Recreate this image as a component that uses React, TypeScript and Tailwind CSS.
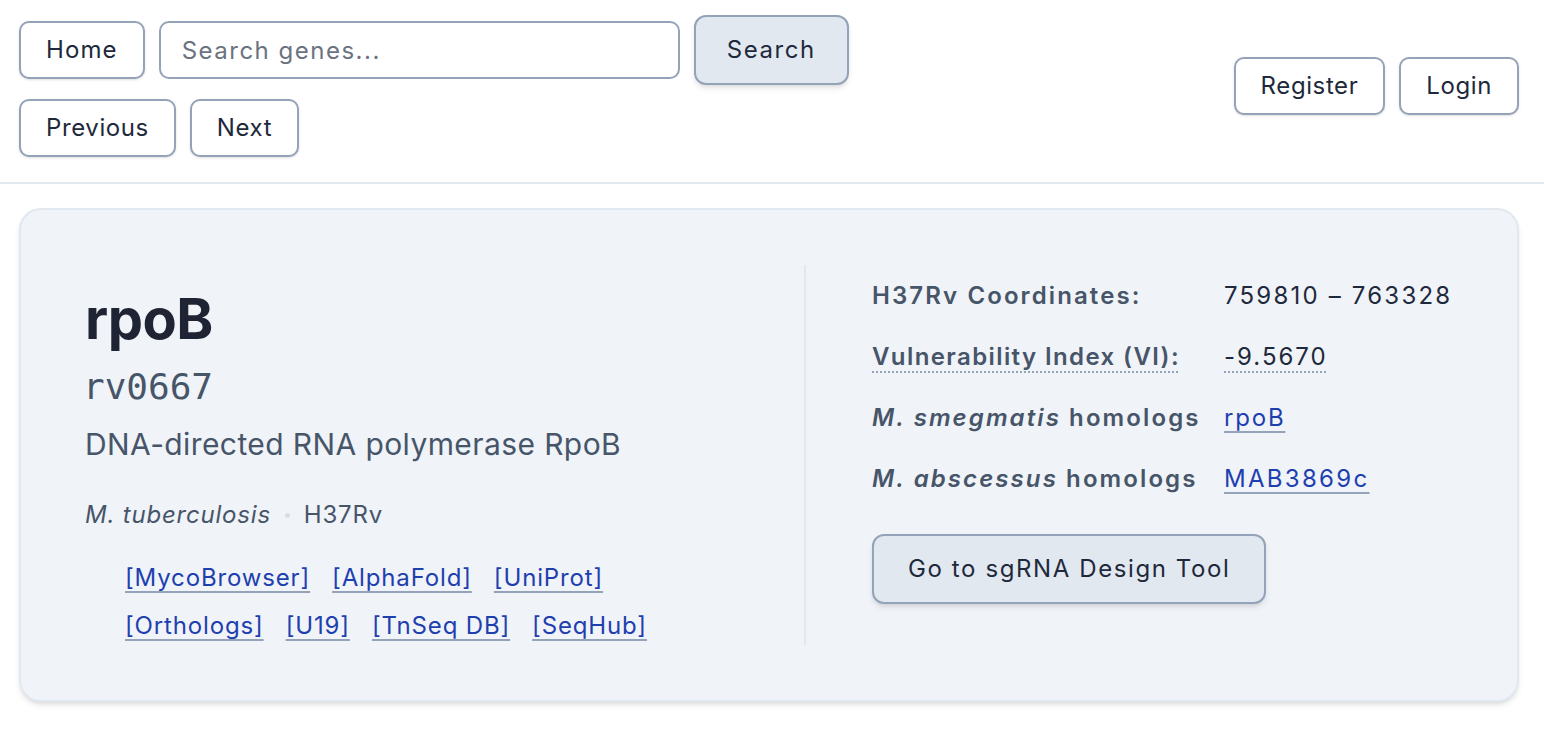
import React from "react";

const btn =
  "h-[58px] px-[25px] rounded-[10px] border-2 border-[#94a3b8] bg-white text-[24px] tracking-[0.6px] text-[#1e293b] shadow-sm flex items-center";

function A({ children, className = "" }: { children: React.ReactNode; className?: string }) {
  return (
    <a
      href="#"
      className={
        "text-[#1e40af] underline decoration-[#94a3b8] decoration-2 underline-offset-[5px] " + className
      }
    >
      {children}
    </a>
  );
}

export default function App() {
  return (
    <div
      className="min-h-[730px] bg-white text-[#1e293b]"
      style={{ fontFamily: "Inter, 'Noto Sans', sans-serif" }}
    >
      <header className="flex items-center justify-between pl-[19px] pr-[25px] pt-[15px] pb-[25px] border-b-2 border-[#e2e8f0]">
        <div className="flex flex-col gap-[14px]">
          <div className="flex items-center gap-[14px]">
            <button className="h-[58px] px-[25px] rounded-[10px] border-2 border-[#94a3b8] bg-white text-[24px] tracking-[1.1px] text-[#1e293b] shadow-sm flex items-center">
              Home
            </button>
            <input
              placeholder="Search genes..."
              className="h-[58px] w-[521px] px-[21px] rounded-[10px] border-2 border-[#94a3b8] text-[24px] tracking-[1.5px] placeholder:text-[#6b7280] outline-none"
            />
            <button className="h-[70px] px-[31px] rounded-[12px] border-2 border-[#94a3b8] bg-[#e2e8f0] text-[24px] tracking-[1.6px] text-[#1e293b] shadow-md">
              Search
            </button>
          </div>
          <div className="flex items-center gap-[14px]">
            <button className={btn}>Previous</button>
            <button className={btn}>Next</button>
          </div>
        </div>
        <div className="flex items-center gap-[14px]">
          <button className={btn}>Register</button>
          <button className={btn}>Login</button>
        </div>
      </header>

      <main className="pl-[19px] pr-[25px] pt-[24px]">
        <div className="h-[494px] rounded-[22px] border-2 border-[#e2e8f0] bg-[#f0f3f8] shadow-md flex px-[64px] py-[55px]">
          <div className="w-[721px] shrink-0 border-r-2 border-[#e2e8f0] pt-[22px]">
            <h1 className="text-[56px] font-bold leading-[64px] text-[#1e2433] tracking-[-0.5px]">rpoB</h1>
            <div
              className="text-[36px] leading-[44px] text-[#475569] mt-[14px] -ml-[2px]"
              style={{ fontFamily: "'DejaVu Sans Mono', monospace" }}
            >
              rv0667
            </div>
            <p className="text-[30px] leading-[40px] tracking-[0.4px] text-[#475569] mt-[15px]">
              DNA-directed RNA polymerase RpoB
            </p>
            <div className="flex items-center text-[24px] tracking-[0.8px] text-[#475569] mt-[33px]">
              <span className="italic">M. tuberculosis</span>
              <span className="mx-[14px] w-[5px] h-[5px] rounded-full bg-[#d8dee8]"></span>
              <span>H37Rv</span>
            </div>
            <div className="ml-[40px] mt-[27px] text-[24px] tracking-[0.85px] leading-[36px] flex flex-col gap-[12px]">
              <div className="flex gap-[22px]">
                <A>[MycoBrowser]</A>
                <A>[AlphaFold]</A>
                <A>[UniProt]</A>
              </div>
              <div className="flex gap-[22px]">
                <A>[Orthologs]</A>
                <A>[U19]</A>
                <A>[TnSeq DB]</A>
                <A>[SeqHub]</A>
              </div>
            </div>
          </div>
          <div className="flex-1 pl-[66px] pt-[13px] whitespace-nowrap">
            <div className="grid grid-cols-[352px_auto] gap-y-[25px] text-[24px] leading-[36px] tracking-[1.2px]">
              <div className="font-semibold text-[#475569] tracking-[2.1px]">H37Rv Coordinates:</div>
              <div className="text-[#1e293b] tracking-[2.2px]">759810 – 763328</div>
              <div>
                <span className="font-semibold text-[#475569] tracking-[1.4px] underline decoration-dotted decoration-[#94a3b8] decoration-2 underline-offset-[6px]">
                  Vulnerability Index (VI):
                </span>
              </div>
              <div>
                <span className="text-[#1e293b] tracking-[2px] underline decoration-dotted decoration-[#94a3b8] decoration-2 underline-offset-[6px]">
                  -9.5670
                </span>
              </div>
              <div className="font-semibold text-[#475569] tracking-[2.1px]">
                <span className="italic">M. smegmatis</span> homologs
              </div>
              <div>
                <A className="tracking-[1.8px]">rpoB</A>
              </div>
              <div className="font-semibold text-[#475569] tracking-[2.1px]">
                <span className="italic">M. abscessus</span> homologs
              </div>
              <div>
                <A className="tracking-[2.3px]">MAB3869c</A>
              </div>
            </div>
            <button className="mt-[37px] h-[70px] px-[34px] rounded-[12px] border-2 border-[#94a3b8] bg-[#e2e8f0] text-[24px] tracking-[1.6px] text-[#1e293b] shadow-md">
              Go to sgRNA Design Tool
            </button>
          </div>
        </div>
      </main>
    </div>
  );
}
